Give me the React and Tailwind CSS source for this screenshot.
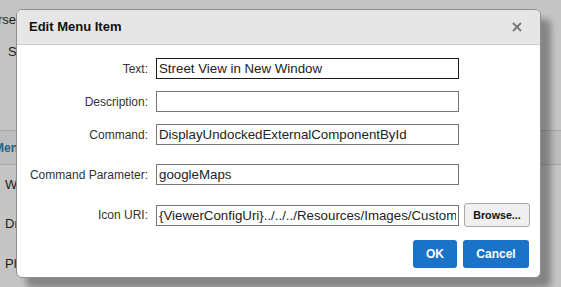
import React from 'react';

const font = { fontFamily: '"Liberation Sans", Arial, sans-serif' };

const Field = ({ label, value, focused, className = '', children }) => (
    <div className={`flex items-center ${className}`}>
        <div className="w-[131px] text-right text-[12px] text-[#333] whitespace-nowrap">{label}</div>
        <input
            readOnly
            defaultValue={value}
            className={`ml-[8px] w-[303px] h-[21px] px-[2px] text-[13.3px] text-[#222] bg-white outline-none border ${focused ? 'border-[#1a1a1a]' : 'border-[#767676]'}`}
        />
        {children}
    </div>
);

const App = () => {
    return (
        <div className="relative w-[561px] h-[287px] overflow-hidden bg-[#c4c4c4] text-[13px] text-[#222]" style={font}>
            {/* page behind the dialog */}
            <div className="flex flex-col">
                <div className="h-[40px] w-[16px] flex items-center justify-end whitespace-nowrap">Traverse</div>
                <div className="h-[24px] flex items-center pl-[8px]">Settings</div>
                <div className="h-[66px]" />
                <div className="h-[35px] flex items-center bg-[#bdbdbd] border-y border-[#a8a8a8] whitespace-nowrap">
                    <span className="-ml-[6px] text-[12px] font-bold text-[#1f6285]">Menu Items</span>
                </div>
                <div className="h-[40px] flex items-center pl-[5px]">Web</div>
                <div className="h-[38px] flex items-center pl-[5px]">Draw</div>
                <div className="h-[42px] flex items-center pl-[5px]">Plan</div>
            </div>

            {/* dialog */}
            <div className="absolute left-[16px] top-[9px] w-[525px] h-[269px] flex flex-col bg-white border border-[#8f8f8f] rounded-[6px] overflow-hidden shadow-[10px_10px_6px_rgba(0,0,0,0.32)]">
                <div className="h-[35px] shrink-0 flex items-center justify-between bg-[#e6e6e6] border-b border-[#cdcdcd] pl-[12px] pr-[18px]">
                    <span className="text-[13px] font-bold text-[#111]">Edit Menu Item</span>
                    <svg width="10" height="10" viewBox="0 0 10 10">
                        <path d="M1 1L9 9M9 1L1 9" stroke="#7a7a7a" strokeWidth="2" />
                    </svg>
                </div>

                <div className="flex flex-col pt-[13px]">
                    <Field label="Text:" value="Street View in New Window" focused />
                    <Field label="Description:" value="" className="mt-[12px]" />
                    <Field label="Command:" value="DisplayUndockedExternalComponentById" className="mt-[12px]" />
                    <Field label="Command Parameter:" value="googleMaps" className="mt-[19px]" />
                    <Field
                        label="Icon URI:"
                        value="{ViewerConfigUri}../../../Resources/Images/Custom/StreetView.png"
                        className="mt-[18px] h-[24px]"
                    >
                        <button className="ml-[5px] w-[66px] h-[24px] bg-[#efefef] border border-[#a9a9a9] rounded-[3px] text-[10.7px] font-bold text-[#111]">
                            Browse...
                        </button>
                    </Field>
                    <div className="flex justify-end gap-[6px] mt-[13px] pr-[11px]">
                        <button className="w-[44px] h-[28px] bg-[#1a73c6] rounded-[3px] text-white text-[12px] font-bold">OK</button>
                        <button className="w-[66px] h-[28px] bg-[#1a73c6] rounded-[3px] text-white text-[12px] font-bold">Cancel</button>
                    </div>
                </div>
            </div>
        </div>
    );
};

export default App;
